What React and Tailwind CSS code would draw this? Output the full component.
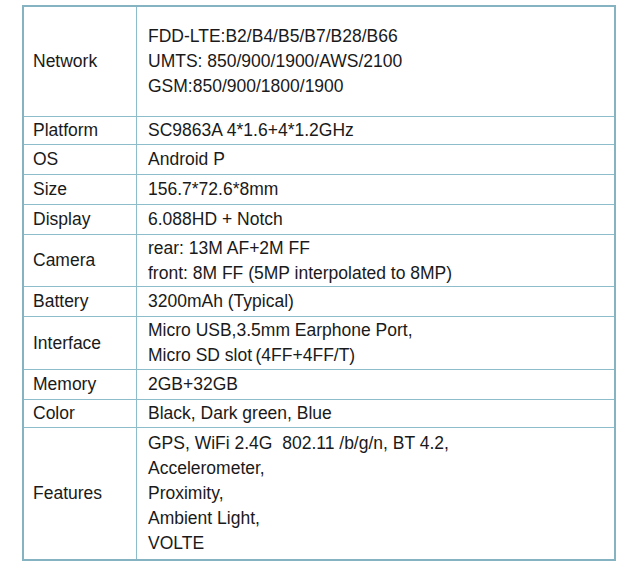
import React from 'react';

const rows = [
    { label: 'Network', h: 'h-[109px]', lines: ['FDD-LTE:B2/B4/B5/B7/B28/B66', 'UMTS: 850/900/1900/AWS/2100', 'GSM:850/900/1800/1900'] },
    { label: 'Platform', h: 'h-[28px]', lines: ['SC9863A 4*1.6+4*1.2GHz'] },
    { label: 'OS', h: 'h-[30px]', lines: ['Android P'] },
    { label: 'Size', h: 'h-[30px]', lines: ['156.7*72.6*8mm'] },
    { label: 'Display', h: 'h-[30px]', lines: ['6.088HD + Notch'] },
    { label: 'Camera', h: 'h-[52px]', lines: ['rear: 13M AF+2M FF', 'front: 8M FF (5MP interpolated to 8MP)'] },
    { label: 'Battery', h: 'h-[30px]', lines: ['3200mAh (Typical)'] },
    { label: 'Interface', h: 'h-[53px]', lines: ['Micro USB,3.5mm Earphone Port,', 'Micro SD slot\u2009(4FF+4FF/T)'] },
    { label: 'Memory', h: 'h-[30px]', lines: ['2GB+32GB'] },
    { label: 'Color', h: 'h-[28px]', lines: ['Black, Dark green, Blue'] },
    { label: 'Features', h: 'h-[132px]', lines: ['GPS, WiFi 2.4G  802.11 /b/g/n, BT 4.2,', 'Accelerometer,', 'Proximity,', 'Ambient Light,', 'VOLTE'] },
];

const App = () => {
    return (
        <div className="min-h-screen bg-white pt-[5px] pl-[22px] text-[#1a1a1a] text-[17.5px] leading-[25px]" style={{ fontFamily: '"Liberation Sans", Arial, sans-serif' }}>
            <div className="w-[594px] border-2 border-[#86b3c2]">
                {rows.map((row, i) => (
                    <div key={row.label} className={`flex ${row.h} ${i > 0 ? 'border-t border-[#8dbccb]' : ''}`}>
                        <div className="w-[113px] shrink-0 border-r border-[#8dbccb] pl-[9px] flex items-center">
                            {row.label}
                        </div>
                        <div className="flex-1 pl-[11px] flex flex-col justify-center whitespace-pre">
                            {row.lines.map((line) => (
                                <div key={line}>{line}</div>
                            ))}
                        </div>
                    </div>
                ))}
            </div>
        </div>
    );
};

export default App;
